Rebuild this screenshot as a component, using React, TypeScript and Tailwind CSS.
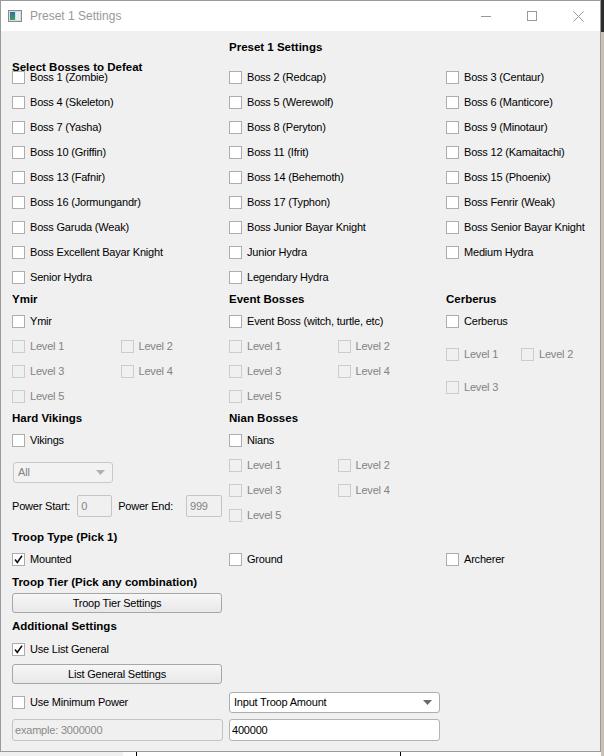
import { ReactNode } from 'react'

const bosses = [
  ['Boss 1 (Zombie)', 'Boss 2 (Redcap)', 'Boss 3 (Centaur)'],
  ['Boss 4 (Skeleton)', 'Boss 5 (Werewolf)', 'Boss 6 (Manticore)'],
  ['Boss 7 (Yasha)', 'Boss 8 (Peryton)', 'Boss 9 (Minotaur)'],
  ['Boss 10 (Griffin)', 'Boss 11 (Ifrit)', 'Boss 12 (Kamaitachi)'],
  ['Boss 13 (Fafnir)', 'Boss 14 (Behemoth)', 'Boss 15 (Phoenix)'],
  ['Boss 16 (Jormungandr)', 'Boss 17 (Typhon)', 'Boss Fenrir (Weak)'],
  ['Boss Garuda (Weak)', 'Boss Junior Bayar Knight', 'Boss Senior Bayar Knight'],
  ['Boss Excellent Bayar Knight', 'Junior Hydra', 'Medium Hydra'],
  ['Senior Hydra', 'Legendary Hydra', ''],
]

function Check({ label, checked = false, disabled = false }: { label: string; checked?: boolean; disabled?: boolean }) {
  return (
    <div className="flex items-center gap-[5px] whitespace-nowrap">
      <span
        className={
          'flex h-[13px] w-[13px] shrink-0 items-center justify-center border ' +
          (disabled ? 'border-[#cccccc] bg-[#f0f0f0]' : 'border-[#adadad] bg-white')
        }
      >
        {checked && (
          <svg width="9" height="9" viewBox="0 0 9 9">
            <path d="M1 4.5 L3.3 7.5 L8 0.8" fill="none" stroke="#111" strokeWidth="1.6" />
          </svg>
        )}
      </span>
      <span className={disabled ? 'text-[#838383]' : 'text-black'}>{label}</span>
    </div>
  )
}

function Heading({ children, h = 'h-[19px]' }: { children: ReactNode; h?: string }) {
  return (
    <div className={`flex items-center text-[11.5px] font-bold tracking-normal whitespace-nowrap ${h}`}>{children}</div>
  )
}

function Levels({ count, colW = 'w-[109px]', rowH = 'h-[25px]' }: { count: number; colW?: string; rowH?: string }) {
  const items = Array.from({ length: count }, (_, i) => `Level ${i + 1}`)
  const rows: string[][] = []
  for (let i = 0; i < items.length; i += 2) rows.push(items.slice(i, i + 2))
  return (
    <div className="flex flex-col">
      {rows.map((r, i) => (
        <div key={i} className={`flex items-center ${rowH}`}>
          {r.map((l) => (
            <div key={l} className={colW}>
              <Check label={l} disabled />
            </div>
          ))}
        </div>
      ))}
    </div>
  )
}

function Button({ label }: { label: string }) {
  return (
    <div className="flex h-[20px] w-[210px] items-center justify-center rounded-[3px] border border-[#a7a7a7] bg-gradient-to-b from-[#f7f7f7] to-[#e8e8e8]">
      {label}
    </div>
  )
}

function ComboArrow({ color }: { color: string }) {
  return (
    <svg width="9" height="5" viewBox="0 0 9 5">
      <path d="M0 0 H9 L4.5 5 Z" fill={color} />
    </svg>
  )
}

export default function App() {
  return (
    <div
      className="relative h-[756px] w-[604px] overflow-hidden bg-white text-[11px] tracking-[-0.2px] text-black"
      style={{ fontFamily: '"Liberation Sans", Arial, sans-serif' }}
    >
      {/* what is behind the window */}
      <div className="absolute left-0 top-[752px] h-[4px] w-[123px] bg-[#f0f0f0]" />
      <div className="absolute left-[136px] top-[752px] h-[4px] w-px bg-black" />
      <div className="absolute left-[400px] top-[752px] h-[4px] w-px bg-black" />
      <div className="absolute right-0 top-0 h-[32px] w-[3px] bg-[#2b2b2b]" />
      <div className="absolute right-0 top-[32px] h-[724px] w-[3px] bg-[#c9c2b4]" />

      <div className="flex h-[752px] w-[601px] flex-col border border-[#9a9a9a] bg-[#f0f0f0]">
        {/* title bar */}
        <div className="flex h-[30px] shrink-0 items-center bg-white">
          <div className="ml-[7px] flex h-[12px] w-[14px] items-center gap-px border border-[#8a8a8a] bg-[#d8dde0] px-px">
            <span className="h-[8px] w-[5px] bg-gradient-to-b from-[#2f6f9f] to-[#3aa05a]" />
            <span className="h-[8px] w-[5px] bg-[#e8eef0]" />
          </div>
          <span className="ml-[8px] text-[12px] tracking-normal text-[#999999]">Preset 1 Settings</span>
          <div className="-mr-[1px] ml-auto flex items-center">
            <div className="flex h-[30px] w-[46px] items-center justify-center">
              <span className="h-px w-[10px] bg-[#999]" />
            </div>
            <div className="flex h-[30px] w-[46px] items-center justify-center">
              <span className="h-[10px] w-[10px] border border-[#999]" />
            </div>
            <div className="flex h-[30px] w-[46px] items-center justify-center">
              <svg width="11" height="11" viewBox="0 0 11 11">
                <path d="M0.5 0.5 L10.5 10.5 M10.5 0.5 L0.5 10.5" stroke="#999" strokeWidth="1" />
              </svg>
            </div>
          </div>
        </div>

        {/* body */}
        <div className="flex flex-col pl-[11px] pt-[7px]">
          <div className="flex h-[20px]">
            <div className="w-[217px]" />
            <Heading h="h-[20px]">Preset 1 Settings</Heading>
          </div>
          <Heading h="h-[20px]">Select Bosses to Defeat</Heading>

          <div className="-mt-[13px] grid grid-cols-[217px_217px_1fr]">
            {bosses.flat().map((b, i) => (
              <div key={i} className="flex h-[25px] items-center">
                {b && <Check label={b} />}
              </div>
            ))}
          </div>

          <div className="grid grid-cols-[217px_217px_1fr]">
            <div className="flex flex-col">
              <Heading>Ymir</Heading>
              <div className="flex h-[25px] items-center">
                <Check label="Ymir" />
              </div>
              <Levels count={5} />
            </div>
            <div className="flex flex-col">
              <Heading>Event Bosses</Heading>
              <div className="flex h-[25px] items-center">
                <Check label="Event Boss (witch, turtle, etc)" />
              </div>
              <Levels count={5} />
            </div>
            <div className="flex flex-col">
              <Heading>Cerberus</Heading>
              <div className="flex h-[25px] items-center">
                <Check label="Cerberus" />
              </div>
              <div className="pt-[4px]">
                <Levels count={3} colW="w-[75px]" rowH="h-[33px]" />
              </div>
            </div>
          </div>

          <div className="grid grid-cols-[217px_217px_1fr]">
            <div className="flex flex-col">
              <Heading>Hard Vikings</Heading>
              <div className="flex h-[25px] items-center">
                <Check label="Vikings" />
              </div>
              <div className="mt-[9px] ml-px flex h-[21px] w-[100px] items-center justify-between rounded-[3px] border border-[#c9c9c9] bg-[#f2f2f2] pl-[4px] pr-[7px] text-[#838383]">
                All
                <ComboArrow color="#b0b0b0" />
              </div>
              <div className="mt-[12px] flex h-[22px] items-center whitespace-nowrap">
                <span>Power Start:</span>
                <span className="ml-[7px] flex h-[22px] w-[35px] items-center rounded-[2px] border border-[#c4c4c4] bg-[#f0f0f0] pl-[3px] text-[#838383]">
                  0
                </span>
                <span className="ml-[6px]">Power End:</span>
                <span className="ml-[13px] flex h-[22px] w-[36px] items-center rounded-[2px] border border-[#c4c4c4] bg-[#f0f0f0] pl-[3px] text-[#838383]">
                  999
                </span>
              </div>
            </div>
            <div className="flex flex-col">
              <Heading>Nian Bosses</Heading>
              <div className="flex h-[25px] items-center">
                <Check label="Nians" />
              </div>
              <Levels count={5} />
            </div>
            <div />
          </div>

          <Heading>Troop Type (Pick 1)</Heading>
          <div className="grid h-[25px] grid-cols-[217px_217px_1fr] items-center">
            <Check label="Mounted" checked />
            <Check label="Ground" />
            <Check label="Archerer" />
          </div>
          <Heading h="h-[21px]">Troop Tier (Pick any combination)</Heading>
          <Button label="Troop Tier Settings" />

          <Heading h="h-[27px]">Additional Settings</Heading>
          <div className="flex h-[18px] items-center">
            <Check label="Use List General" checked />
          </div>
          <div className="mt-[6px]">
            <Button label="List General Settings" />
          </div>

          <div className="mt-[8px] grid grid-cols-[217px_1fr]">
            <div className="flex h-[21px] items-center">
              <Check label="Use Minimum Power" />
            </div>
            <div className="flex h-[21px] w-[211px] items-center justify-between rounded-[3px] border border-[#adadad] bg-white pl-[4px] pr-[7px]">
              Input Troop Amount
              <ComboArrow color="#6a6a6a" />
            </div>
          </div>
          <div className="mt-[6px] grid grid-cols-[217px_1fr]">
            <div className="flex h-[22px] w-[211px] items-center rounded-[3px] border border-[#c4c4c4] bg-[#f0f0f0] pl-[2px] text-[#8a8a8a]">
              example: 3000000
            </div>
            <div className="flex h-[22px] w-[211px] items-center rounded-[3px] border border-[#b4b4b4] bg-white pl-[2px]">
              400000
            </div>
          </div>
        </div>
      </div>
    </div>
  )
}
